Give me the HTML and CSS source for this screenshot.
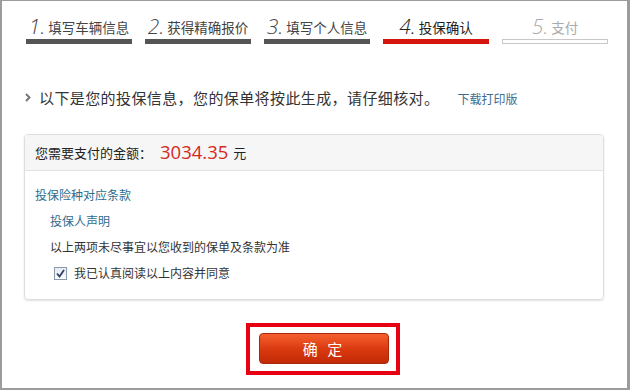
FILE: index.html
```html
<!DOCTYPE html>
<html lang="zh">
<head>
<meta charset="utf-8">
<link rel="stylesheet" href="styles.css">
</head>
<body>
<div class="frame">
  <div class="steps">
    <div class="step done"><div class="label"><span class="num">1.</span>填写车辆信息</div><div class="bar"></div></div>
    <div class="step done"><div class="label"><span class="num">2.</span>获得精确报价</div><div class="bar"></div></div>
    <div class="step done"><div class="label"><span class="num">3.</span>填写个人信息</div><div class="bar"></div></div>
    <div class="step current"><div class="label"><span class="num">4.</span>投保确认</div><div class="bar"></div></div>
    <div class="step todo"><div class="label"><span class="num">5.</span>支付</div><div class="bar"></div></div>
  </div>

  <div class="intro">
    <svg class="chev" width="6" height="9" viewBox="0 0 6 9"><path d="M1 1 L4.5 4.5 L1 8" fill="none" stroke="#777" stroke-width="2"/></svg>
    <span class="intro-text">以下是您的投保信息，您的保单将按此生成，请仔细核对。</span>
    <a class="link">下载打印版</a>
  </div>

  <div class="card">
    <div class="card-head">您需要支付的金额：<span class="amount">3034.35</span><span class="yuan">元</span></div>
    <div class="card-body">
      <div class="row lvl1 blue">投保险种对应条款</div>
      <div class="row lvl2 blue">投保人声明</div>
      <div class="row lvl2">以上两项未尽事宜以您收到的保单及条款为准</div>
      <div class="row check">
        <span class="cb"><svg width="9" height="9" viewBox="0 0 9 9"><path d="M1 4.5 L3.5 7.5 L8 1" fill="none" stroke="#2a3f6b" stroke-width="1.8"/></svg></span>
        我已认真阅读以上内容并同意
      </div>
    </div>
  </div>

  <div class="btn-box"><button class="btn">确 定</button></div>
</div>
</body>
</html>
```

FILE: styles.css
```css
* { box-sizing: border-box; }
html, body { margin: 0; padding: 0; background: #fff; }
body { font-family: "Noto Sans CJK SC", "Noto Sans", sans-serif; color: #333; }

.frame {
  width: 630px;
  height: 390px;
  border-style: solid;
  border-color: #9c9c9c;
  border-width: 1px 3px 2px 2px;
  overflow: hidden;
}

.steps {
  display: flex;
  gap: 13px;
  padding-left: 24px;
  margin-top: 13px;
}
.step { width: 106px; }
.label {
  height: 24px;
  line-height: 24px;
  font-size: 13.5px;
  text-align: center;
  color: #444;
  white-space: nowrap;
}
.num {
  font-family: "Open Sans", sans-serif;
  font-style: italic;
  font-weight: 300;
  font-size: 21px;
  color: #444;
  margin-right: 3px;
  vertical-align: -1px;
}
.bar { height: 5px; margin-top: 1px; }
.done .bar { background: #555; }
.current .bar { background: #d4160e; }
.current .label, .current .num { color: #222; }
.todo .bar { border: 1px solid #c8c8c8; background: #fff; }
.todo .label, .todo .num { color: #aaa; }

.intro {
  display: flex;
  align-items: center;
  margin-top: 43px;
  padding-left: 23px;
  height: 20px;
}
.chev { margin-right: 8px; margin-top: 1px; }
.intro-text { font-size: 15px; color: #333; letter-spacing: 0.4px; }
.link { font-size: 12px; color: #3b6d92; margin-left: 18px; margin-top: 2px; }

.card {
  margin-top: 27px;
  margin-left: 22px;
  width: 580px;
  border: 1px solid #dedede;
  border-radius: 4px;
  box-shadow: 0 1px 2px rgba(0,0,0,0.12);
  overflow: hidden;
}
.card-head {
  height: 36px;
  background: #f6f6f6;
  border-bottom: 1px solid #e2e2e2;
  padding-left: 10px;
  display: flex;
  align-items: center;
  font-size: 13px;
  color: #222;
}
.amount {
  font-family: "Open Sans", sans-serif;
  font-size: 18.5px;
  color: #d42a1e;
  margin-left: 8px;
  margin-top: -2px;
}
.yuan { margin-left: 5px; }
.card-body { padding: 11px 0 13px; }
.row { height: 26px; line-height: 26px; font-size: 12px; color: #333; }
.lvl1 { padding-left: 10px; }
.lvl2 { padding-left: 25px; }
.blue { color: #2e6c8e; }
.check { display: flex; align-items: center; padding-left: 29px; }
.cb {
  width: 13px; height: 13px;
  border: 1px solid #8a99ab;
  background: linear-gradient(#e6ebf2, #fafbfc);
  display: flex; align-items: center; justify-content: center;
  margin-right: 7px;
}

.btn-box {
  margin-top: 23px;
  margin-left: 244px;
  width: 154px;
  height: 52px;
  border: 4px solid #e60012;
  padding: 6px 0 0 9px;
}
.btn {
  display: block;
  width: 130px;
  height: 31px;
  border: 1px solid #a8260a;
  border-radius: 4px;
  background: linear-gradient(#f5602f, #d8380e 55%, #c22a06);
  color: #fff;
  font-family: "Noto Sans CJK SC", sans-serif;
  font-size: 15px;
  letter-spacing: 3px;
  padding: 0;
}
```
